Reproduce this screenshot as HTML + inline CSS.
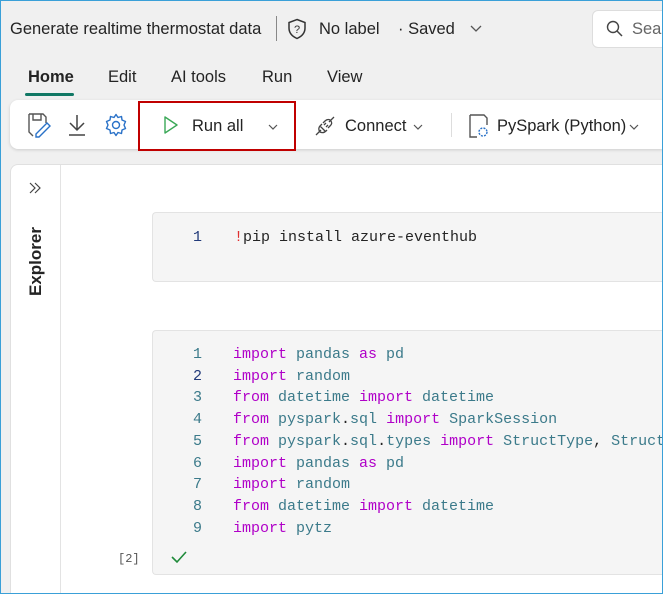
<!DOCTYPE html>
<html><head><meta charset="utf-8"><style>
*{box-sizing:border-box;margin:0;padding:0}
html,body{width:663px;height:594px;overflow:hidden}
body{background:#f0f0f0;font-family:"Liberation Sans",sans-serif;color:#242424;position:relative}
.frame{position:absolute;left:0;top:0;width:663px;height:594px;border:1px solid #3aa0d8;pointer-events:none;z-index:5}
.abs{position:absolute}
.t{font-size:16.5px;white-space:nowrap}
.tab{font-size:16.5px;top:68px}
.panel{left:10px;top:164px;width:653px;height:430px;background:#fff;border-radius:8px 0 0 0;border:1px solid #e0e0e0;border-right:none;border-bottom:none}
.cell{background:#f5f5f5;border:1px solid #e3e3e3;border-right:none;border-radius:4px 0 0 4px;left:152px;width:511px}
.code{font-family:"Liberation Mono",monospace;font-size:15px;line-height:21.7px;white-space:pre;color:#3b7a8a}
.k{color:#b000c8}
.n{color:#3b7a8a}
.ln{position:absolute;left:40px;width:10px;text-align:right}
</style></head><body>
<div class="frame"></div>
<div class="abs t" style="left:10px;top:20px">Generate realtime thermostat data</div>
<div class="abs" style="left:276px;top:16px;width:1px;height:25px;background:#888"></div>
<svg class="abs" style="left:287px;top:18px" width="20" height="22" viewBox="0 0 20 22"><path d="M10 1.5 L18 4.5 V10 C18 15 14.5 18.5 10 20.5 C5.5 18.5 2 15 2 10 V4.5 Z" fill="none" stroke="#333" stroke-width="1.5"/><text x="10" y="15" font-size="11" text-anchor="middle" font-family="Liberation Sans" fill="#333">?</text></svg>
<div class="abs t" style="left:319px;top:20px">No label</div>
<div class="abs t" style="left:398px;top:20px">· Saved</div>
<svg class="abs" style="left:470px;top:25px" width="12" height="8"><path d="M1 1 L6 6 L11 1" fill="none" stroke="#555" stroke-width="1.3"/></svg>
<div class="abs" style="left:592px;top:10px;width:80px;height:38px;background:#fff;border:1px solid #ddd;border-radius:6px"></div>
<svg class="abs" style="left:606px;top:20px" width="18" height="18"><circle cx="7" cy="7" r="5.5" fill="none" stroke="#444" stroke-width="1.4"/><path d="M11 11 L16 16" stroke="#444" stroke-width="1.5"/></svg>
<div class="abs t" style="left:632px;top:20px;color:#666">Sear</div>

<div class="abs tab" style="left:28px;font-weight:bold">Home</div>
<div class="abs" style="left:25px;top:93px;width:49px;height:3px;background:#117865;border-radius:2px"></div>
<div class="abs tab" style="left:108px">Edit</div>
<div class="abs tab" style="left:171px">AI tools</div>
<div class="abs tab" style="left:262px">Run</div>
<div class="abs tab" style="left:327px">View</div>

<div class="abs" style="left:10px;top:100px;width:653px;height:49px;background:#fff;border-radius:8px 0 0 8px;box-shadow:0 1px 3px rgba(0,0,0,.15)"></div>
<svg class="abs" style="left:26px;top:112px" width="26" height="26" viewBox="0 0 26 26"><path d="M3 2 H17 L20 5 V11 M3 2 V20 L7 24 M7 2 V8 H15 V2" fill="none" stroke="#555" stroke-width="1.4"/><path d="M10 22 L21 11 L24 14 L13 25 H10 Z" fill="none" stroke="#2a72c8" stroke-width="1.4"/></svg>
<svg class="abs" style="left:66px;top:113px" width="22" height="24"><path d="M11 2 V17 M4 10 L11 17 L18 10 M3 22 H19" fill="none" stroke="#444" stroke-width="1.5"/></svg>
<svg class="abs" style="left:104px;top:113px" width="24" height="24" viewBox="0 0 24 24"><path d="M12 1.5 L14 4.5 L17.5 3.5 L18 7 L21.5 8.5 L20 12 L21.5 15.5 L18 17 L17.5 20.5 L14 19.5 L12 22.5 L10 19.5 L6.5 20.5 L6 17 L2.5 15.5 L4 12 L2.5 8.5 L6 7 L6.5 3.5 L10 4.5 Z" fill="none" stroke="#2a72c8" stroke-width="1.4" stroke-linejoin="round"/><circle cx="12" cy="12" r="3.5" fill="none" stroke="#2a72c8" stroke-width="1.4"/></svg>
<div class="abs" style="left:138px;top:101px;width:158px;height:50px;border:2.5px solid #c00000"></div>
<svg class="abs" style="left:163px;top:115px" width="16" height="20"><path d="M2 2 L14 10 L2 18 Z" fill="none" stroke="#3aa857" stroke-width="1.4" stroke-linejoin="round"/></svg>
<div class="abs t" style="left:192px;top:117px">Run all</div>
<svg class="abs" style="left:268px;top:124px" width="10" height="7"><path d="M1 1 L5 5 L9 1" fill="none" stroke="#555" stroke-width="1.2"/></svg>
<svg class="abs" style="left:314px;top:115px" width="22" height="22"><path d="M2 20 L7 15 M15 7 L20 2 M6 11 L11 16 M9 8 L11 6 C13 4 16 4 17 6 C18 8 18 9 16 11 L14 13 M8 9 L6 11 C4 13 5 16 6 17 C8 18 10 18 12 16 L13 15 M10 10 L12 8 M12 12 L14 10" fill="none" stroke="#444" stroke-width="1.3"/></svg>
<div class="abs t" style="left:345px;top:117px">Connect</div>
<svg class="abs" style="left:413px;top:124px" width="10" height="7"><path d="M1 1 L5 5 L9 1" fill="none" stroke="#555" stroke-width="1.2"/></svg>
<div class="abs" style="left:451px;top:113px;width:1px;height:24px;background:#ddd"></div>
<svg class="abs" style="left:467px;top:113px" width="24" height="26"><path d="M3 2 H17 L20 5 V12 M3 2 V24 H10" fill="none" stroke="#555" stroke-width="1.4"/><circle cx="16" cy="19" r="4" fill="none" stroke="#2a72c8" stroke-width="1.4" stroke-dasharray="2 1.2"/></svg>
<div class="abs t" style="left:497px;top:117px">PySpark (Python)</div>
<svg class="abs" style="left:629px;top:124px" width="10" height="7"><path d="M1 1 L5 5 L9 1" fill="none" stroke="#555" stroke-width="1.2"/></svg>

<div class="abs panel"></div>
<div class="abs" style="left:60px;top:165px;width:1px;height:429px;background:#e3e3e3"></div>
<svg class="abs" style="left:28px;top:181px" width="14" height="14"><path d="M2 2 L7 7 L2 12 M7 2 L12 7 L7 12" fill="none" stroke="#444" stroke-width="1.2"/></svg>
<div class="abs" style="left:26px;top:296px;transform:rotate(-90deg);transform-origin:left top;font-size:17px;font-weight:bold;color:#242424">Explorer</div>

<div class="abs cell" style="top:212px;height:70px"></div>
<div class="abs code" style="left:193px;top:227px;color:#223a7a">1</div>
<div class="abs code" style="left:234px;top:227px"><span style="color:#e03030">!</span><span style="color:#242424">pip install azure-eventhub</span></div>

<div class="abs" style="left:152px;top:330px;width:511px;height:245px;overflow:hidden">
<div class="abs cell" style="left:0;top:0;height:245px"></div>
<div class="abs code" style="left:0;top:14px;width:40px"><span class="ln" style="position:static;display:block;padding-left:41px">1</span><span style="display:block;padding-left:41px;color:#223a7a">2</span><span style="display:block;padding-left:41px">3</span><span style="display:block;padding-left:41px">4</span><span style="display:block;padding-left:41px">5</span><span style="display:block;padding-left:41px">6</span><span style="display:block;padding-left:41px">7</span><span style="display:block;padding-left:41px">8</span><span style="display:block;padding-left:41px">9</span></div>
<div class="abs code" style="left:81px;top:14px"><span class="k">import</span> pandas <span class="k">as</span> pd
<span class="k">import</span> random
<span class="k">from</span> datetime <span class="k">import</span> datetime
<span class="k">from</span> pyspark<span style="color:#242424">.</span>sql <span class="k">import</span> SparkSession
<span class="k">from</span> pyspark<span style="color:#242424">.</span>sql<span style="color:#242424">.</span>types <span class="k">import</span> StructType<span style="color:#242424">,</span> StructField
<span class="k">import</span> pandas <span class="k">as</span> pd
<span class="k">import</span> random
<span class="k">from</span> datetime <span class="k">import</span> datetime
<span class="k">import</span> pytz</div>
</div>
<div class="abs" style="left:118px;top:552px;font-family:'Liberation Mono',monospace;font-size:12px;color:#555">[2]</div>
<svg class="abs" style="left:170px;top:550px" width="18" height="14"><path d="M2 7 L7 12 L16 2" fill="none" stroke="#1f8a3a" stroke-width="1.6"/></svg>
</body></html>
